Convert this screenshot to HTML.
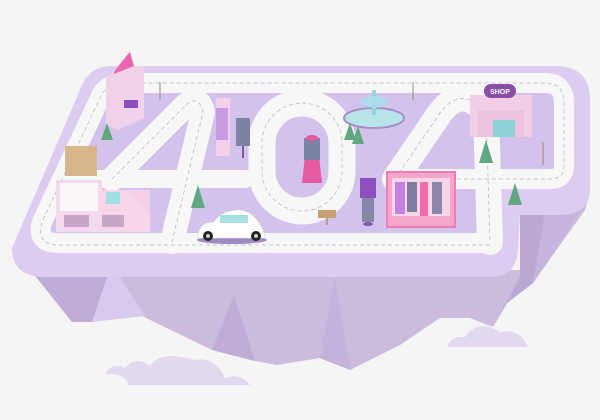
<!DOCTYPE html>
<html><head><meta charset="utf-8"><style>
html,body{margin:0;padding:0;background:#f5f5f5;width:600px;height:420px;overflow:hidden}
svg{display:block}
</style></head><body>
<svg width="600" height="420" viewBox="0 0 600 420" xmlns="http://www.w3.org/2000/svg">
<rect width="600" height="420" fill="#f5f5f5"/>
<!-- cliff -->
<polygon points="32,270 520,270 520,212 588,198 585,210 533,283 507,303 493,327 470,318 440,318 400,345 350,370 320,358 277,365 255,361 212,350 140,315 92,322 72,322" fill="#cbbcdd"/>
<polygon points="32,272 107,277 92,322 72,322" fill="#bfadd7"/>
<polygon points="107,277 120,277 145,316 92,322" fill="#d8caee"/>
<polygon points="234,295 255,361 212,350" fill="#bfadd7"/>
<polygon points="335,277 350,370 320,358" fill="#c3b2da"/>
<polygon points="520,215 588,198 533,283 507,303 493,327 520,277" fill="#bba8d4"/>
<polygon points="545,212 588,198 533,283" fill="#c6b4dd"/>
<!-- platform top -->
<path d="M112,66 L555,66 Q590,66 590,100 L590,188 Q590,215 560,215 L520,215 L518,250 Q516,277 490,277 L45,277 Q12,277 12,248 L80,90 Q88,66 112,66 Z" fill="#dccdf0"/>
<path d="M118,80 L550,80 Q573,80 573,100 L573,175 Q573,185 560,185 L500,185 L500,240 Q500,250 490,250 L48,250 Q30,250 36,232 L96,96 Q102,80 118,80 Z" fill="#d3c3ec"/>
<!-- roads -->
<g fill="none" stroke="#f7f7f8" stroke-linecap="round" stroke-linejoin="round">
<path d="M490,243 L58,243 Q36,243 42,222 L100,98 Q106,83 125,83 L545,83 Q564,83 564,103 L564,166 Q564,179 550,179 L395,179" stroke-width="20"/>
<path d="M65,179 L245,179" stroke-width="18"/>
<path d="M112,179 L183,108 Q198,92 203,112 L172,242" stroke-width="24"/>
<path d="M395,179 L440,113 Q462,84 486,113 L490,242" stroke-width="26"/>
<rect x="262" y="103" width="80" height="108" rx="40" stroke-width="27"/>
</g>
<g fill="none" stroke="#b9b9c4" stroke-width="0.8" stroke-dasharray="4 3">
<path d="M490,245 L58,245 Q36,245 42,222 L100,98 Q106,83 125,83 L545,83 Q564,83 564,103 L564,166 Q564,179 550,179 L395,179"/>
<path d="M112,179 L183,108 Q198,92 203,112 L172,242"/>
<path d="M395,179 L440,113 Q462,84 486,113 L490,242"/>
<rect x="262" y="103" width="80" height="108" rx="40"/>
</g>
<!-- left building -->
<rect x="56" y="180" width="46" height="52" fill="#f4d8ee"/>
<rect x="102" y="190" width="48" height="42" fill="#f5cfe6"/>
<path d="M102,190 L125,190 L150,215 L150,232 L102,232 Z" fill="#f7d6ea"/>
<rect x="65" y="146" width="32" height="30" fill="#d9b58e"/>
<g fill="#fff"><rect x="60" y="183" width="38" height="28" opacity=".8"/></g>
<rect x="106" y="192" width="14" height="12" fill="#9fe0e3"/>
<rect x="64" y="215" width="25" height="12" fill="#c7a7c8"/><rect x="102" y="215" width="22" height="12" fill="#c7a7c8"/>
<!-- tall building + shoe -->
<path d="M106,78 L120,66 L144,66 L144,118 L118,130 L106,125 Z" fill="#f0d3ea"/>
<path d="M114,72 Q126,56 130,52 L134,66 L114,74 Z" fill="#e768ae"/>
<rect x="124" y="100" width="14" height="8" fill="#8d4fbf"/>
<!-- rack -->
<rect x="216" y="98" width="14" height="58" fill="#f3d1ea"/>
<rect x="216" y="108" width="12" height="32" fill="#c99ae2"/>
<rect x="236" y="118" width="14" height="28" fill="#7d83a6"/>
<rect x="242" y="146" width="2" height="12" fill="#7c5aa0"/>
<!-- lamps -->
<g stroke="#a08878" stroke-width="1"><line x1="160" y1="82" x2="160" y2="100"/><line x1="413" y1="82" x2="413" y2="100"/><line x1="543" y1="142" x2="543" y2="165"/></g>
<!-- fountain -->
<ellipse cx="374" cy="118" rx="30" ry="10" fill="#b9e4ea" stroke="#a98cc8" stroke-width="2"/>
<rect x="372" y="90" width="4" height="25" fill="#8fd6df"/>
<ellipse cx="374" cy="102" rx="14" ry="6" fill="#a8e0e8" opacity=".8"/>
<!-- shop -->
<rect x="470" y="95" width="62" height="42" fill="#f2cde6"/>
<rect x="478" y="110" width="46" height="27" fill="#ecc2dd"/>
<rect x="484" y="84" width="32" height="14" rx="7" fill="#8a4ea6"/>
<text x="500" y="94" font-family="Liberation Sans, sans-serif" font-size="7" font-weight="bold" fill="#fff" text-anchor="middle">SHOP</text>
<rect x="493" y="120" width="22" height="17" fill="#8fd0d5"/>
<!-- mannequin -->
<path d="M306,147 L318,147 L322,183 L302,183 Z" fill="#e55ba1"/>
<rect x="304" y="138" width="16" height="22" fill="#7d83a6"/>
<ellipse cx="312" cy="138" rx="6" ry="3" fill="#e55ba1"/>
<rect x="362" y="190" width="12" height="32" fill="#8388a8"/>
<rect x="360" y="178" width="16" height="20" fill="#8d4fbf"/>
<ellipse cx="368" cy="224" rx="5" ry="2" fill="#7c5aa0"/>
<!-- display case -->
<rect x="387" y="172" width="68" height="55" fill="#f6a6cb" stroke="#f07cb4" stroke-width="2"/>
<rect x="392" y="178" width="58" height="38" fill="#f9d6e8"/>
<rect x="395" y="182" width="10" height="32" fill="#c57fe0"/>
<rect x="407" y="182" width="10" height="30" fill="#7b7fa3"/>
<rect x="420" y="182" width="8" height="34" fill="#f06ba9"/>
<rect x="432" y="182" width="10" height="32" fill="#8b87aa"/>
<!-- sign -->
<rect x="318" y="210" width="18" height="8" fill="#c9a272"/>
<line x1="327" y1="218" x2="327" y2="225" stroke="#a07a50"/>
<!-- trees -->
<g fill="#5fa880">
<path d="M107,123 L101,140 L113,140 Z"/><path d="M198,185 L191,208 L205,208 Z"/>
<path d="M350,123 L344,140 L356,140 Z"/><path d="M358,126 L352,144 L364,144 Z"/>
<path d="M486,140 L479,163 L493,163 Z"/><path d="M515,183 L508,205 L522,205 Z"/>
</g>
<!-- car -->
<ellipse cx="232" cy="240" rx="35" ry="4" fill="#a18bc4"/>
<path d="M198,238 Q198,222 214,222 Q222,210 240,210 Q254,212 262,228 Q266,238 264,238 Z" fill="#fff" stroke="#ddd" stroke-width="0.6"/>
<rect x="220" y="215" width="28" height="8" fill="#a8dfe0"/>
<circle cx="208" cy="236" r="5" fill="#222"/><circle cx="208" cy="236" r="2" fill="#ccc"/>
<circle cx="256" cy="236" r="5" fill="#222"/><circle cx="256" cy="236" r="2" fill="#ccc"/>
<!-- clouds -->
<path d="M105,374 Q112,362 125,368 Q135,355 150,366 Q160,350 195,360 Q215,356 225,378 Q240,372 250,385 L128,385 Q128,374 105,374 Z" fill="#e2d8f0"/>
<path d="M447,347 Q452,335 465,337 Q478,318 500,332 Q520,328 528,347 Z" fill="#e2d8f0"/>
</svg>
</body></html>
